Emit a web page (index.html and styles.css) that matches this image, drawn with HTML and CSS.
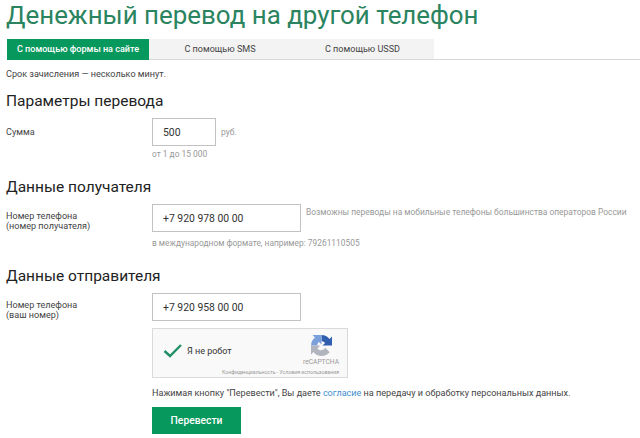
FILE: index.html
```html
<!DOCTYPE html>
<html lang="ru">
<head>
  <meta charset="UTF-8" />
  <meta name="viewport" content="width=device-width, initial-scale=1.0" />
  <title>Денежный перевод на другой телефон</title>
  <link rel="stylesheet" href="styles.css">
</head>
<body>
  <h1>Денежный перевод на другой телефон</h1>
  <nav class="tabs">
    <a class="tab tab-form active">С помощью формы на сайте</a>
    <a class="tab tab-sms">С помощью SMS</a>
    <a class="tab tab-ussd">С помощью USSD</a>
  </nav>
  <main>
    <p class="term">Срок зачисления — несколько минут.</p>
    <form>
      <section class="amount">
        <h2>Параметры перевода</h2>
        <div class="row">
          <label for="sum">Сумма</label>
          <div class="field">
            <div class="line">
              <input id="sum" class="short" type="text" value="500">
              <span class="unit">руб.</span>
            </div>
            <p class="hint">от 1 до 15 000</p>
          </div>
        </div>
      </section>

      <section class="recipient">
        <h2>Данные получателя</h2>
        <div class="row">
          <label for="to">Номер телефона<br>(номер получателя)</label>
          <div class="field">
            <div class="line">
              <input id="to" type="text" value="+7 920 978 00 00">
              <span class="note">Возможны переводы на мобильные телефоны большинства операторов России</span>
            </div>
            <p class="hint">в международном формате, например: 79261110505</p>
          </div>
        </div>
      </section>

      <section class="sender">
        <h2>Данные отправителя</h2>
        <div class="row">
          <label for="from">Номер телефона<br>(ваш номер)</label>
          <div class="field">
            <div class="line">
              <input id="from" type="text" value="+7 920 958 00 00">
            </div>
            <div class="captcha">
              <div class="check">
                <svg width="20" height="15" viewBox="0 0 20 15">
                  <path d="M1.5 7 L7 12 L18 1" fill="none" stroke="#239067" stroke-width="2.4" />
                </svg>
                <span>Я не робот</span>
              </div>
              <div class="brand">
                <svg width="21" height="21" viewBox="0 0 64 64">
                  <path d="M64 32V4.600l-7.500 7.500A32 32 0 0 0 32 0v19c4 0 8 2 11 5l-8 8z" fill="#2f5fae" />
                  <path d="M32 0H4.600l7.500 7.500A32 32 0 0 0 0 32h19c0-4 2-8 5-11l8 8z" fill="#7ba0dc" />
                  <path d="M0 32v27.400l7.500-7.500A32 32 0 0 0 57 52.400L43.500 39c-3 4.500-7 7.600-13 7.600-4.500 0-8-2-11-5.600l9-9z" fill="#b0b5be" />
                </svg>
                <span>reCAPTCHA</span>
              </div>
              <p class="legal">Конфиденциальность - Условия использования</p>
            </div>
            <p class="agree">Нажимая кнопку "Перевести", Вы даете <a>согласие</a> на передачу и обработку персональных данных.</p>
            <button type="button">Перевести</button>
          </div>
        </div>
      </section>
    </form>
  </main>
</body>
</html>
```
FILE: styles.css
```css
* {
  box-sizing: border-box;
}
body {
  font-family: Roboto, Arial, sans-serif;
  font-size: 9.07px;
  line-height: 11px;
  margin: 0;
  background: #fff;
  color: #444;
  overflow: hidden;
}
h1, h2, p {
  margin: 0;
  font-weight: 400;
  white-space: nowrap;
}
h1 {
  height: 39px;
  padding-left: 6px;
  font-size: 25.9px;
  line-height: 31px;
  color: #2b8460;
}
.tabs {
  display: flex;
  height: 21px;
  margin-left: 7px;
  border-bottom: 1px solid #d8d8d8;
}
.tab {
  height: 20px;
  line-height: 20px;
  text-align: center;
  background: #f3f3f3;
  color: #444;
}
.tab-form {
  width: 142px;
}
.tab-sms {
  width: 142px;
}
.tab-ussd {
  width: 143px;
}
.tab.active {
  height: 21px;
  background: #07985d;
  color: #fff;
  font-weight: 500;
}
main {
  padding-left: 6px;
}
.term {
  padding-top: 9px;
}
h2 {
  font-size: 15.5px;
  line-height: 18px;
  color: #222;
}
.amount {
  height: 85px;
  padding-top: 12px;
}
.recipient {
  height: 89px;
  padding-top: 13px;
}
.sender {
  padding-top: 13px;
}
.row {
  display: flex;
  margin-top: 8px;
}
label {
  flex: none;
  width: 146px;
  padding-top: 7px;
  line-height: 10px;
}
.amount label {
  padding-top: 9px;
}
.line {
  display: flex;
}
input {
  width: 149px;
  height: 28px;
  padding: 0 10px;
  border: 1px solid #c2c2c2;
  background: #fff;
  font: 10.4px Roboto, Arial, sans-serif;
  color: #333;
}
input.short {
  width: 64px;
}
.unit {
  padding: 9px 0 0 5px;
  font-size: 8.5px;
  color: #999;
}
.note {
  padding: 3px 0 0 5px;
  font-size: 8.43px;
  color: #999;
  white-space: nowrap;
}
.hint {
  padding-top: 3px;
  font-size: 8.4px;
  color: #999;
}
.recipient .hint {
  padding-top: 6px;
}
.captcha {
  display: grid;
  grid-template-columns: 1fr 36px;
  grid-template-rows: 39px 9px;
  width: 196px;
  height: 50px;
  margin-top: 7px;
  padding-right: 8px;
  border: 1px solid #dadada;
  background: #f9f9f9;
}
.check {
  display: flex;
  align-items: center;
  gap: 4px;
  padding: 6px 0 0 10px;
  font-size: 9px;
  color: #333;
}
.brand {
  display: flex;
  flex-direction: column;
  align-items: center;
  padding-top: 6px;
  font-size: 6.7px;
  line-height: 12px;
  color: #999;
}
.brand svg {
  flex: none;
}
.legal {
  grid-column: 1 / 3;
  text-align: right;
  font-size: 5.2px;
  line-height: 8px;
  color: #999;
}
.agree {
  padding-top: 10px;
}
.agree a {
  color: #3f8fd0;
}
button {
  display: block;
  width: 89px;
  height: 27px;
  margin-top: 8px;
  padding: 0;
  border: none;
  background: #07985d;
  color: #fff;
  font: 500 10.3px Roboto, Arial, sans-serif;
}
```
